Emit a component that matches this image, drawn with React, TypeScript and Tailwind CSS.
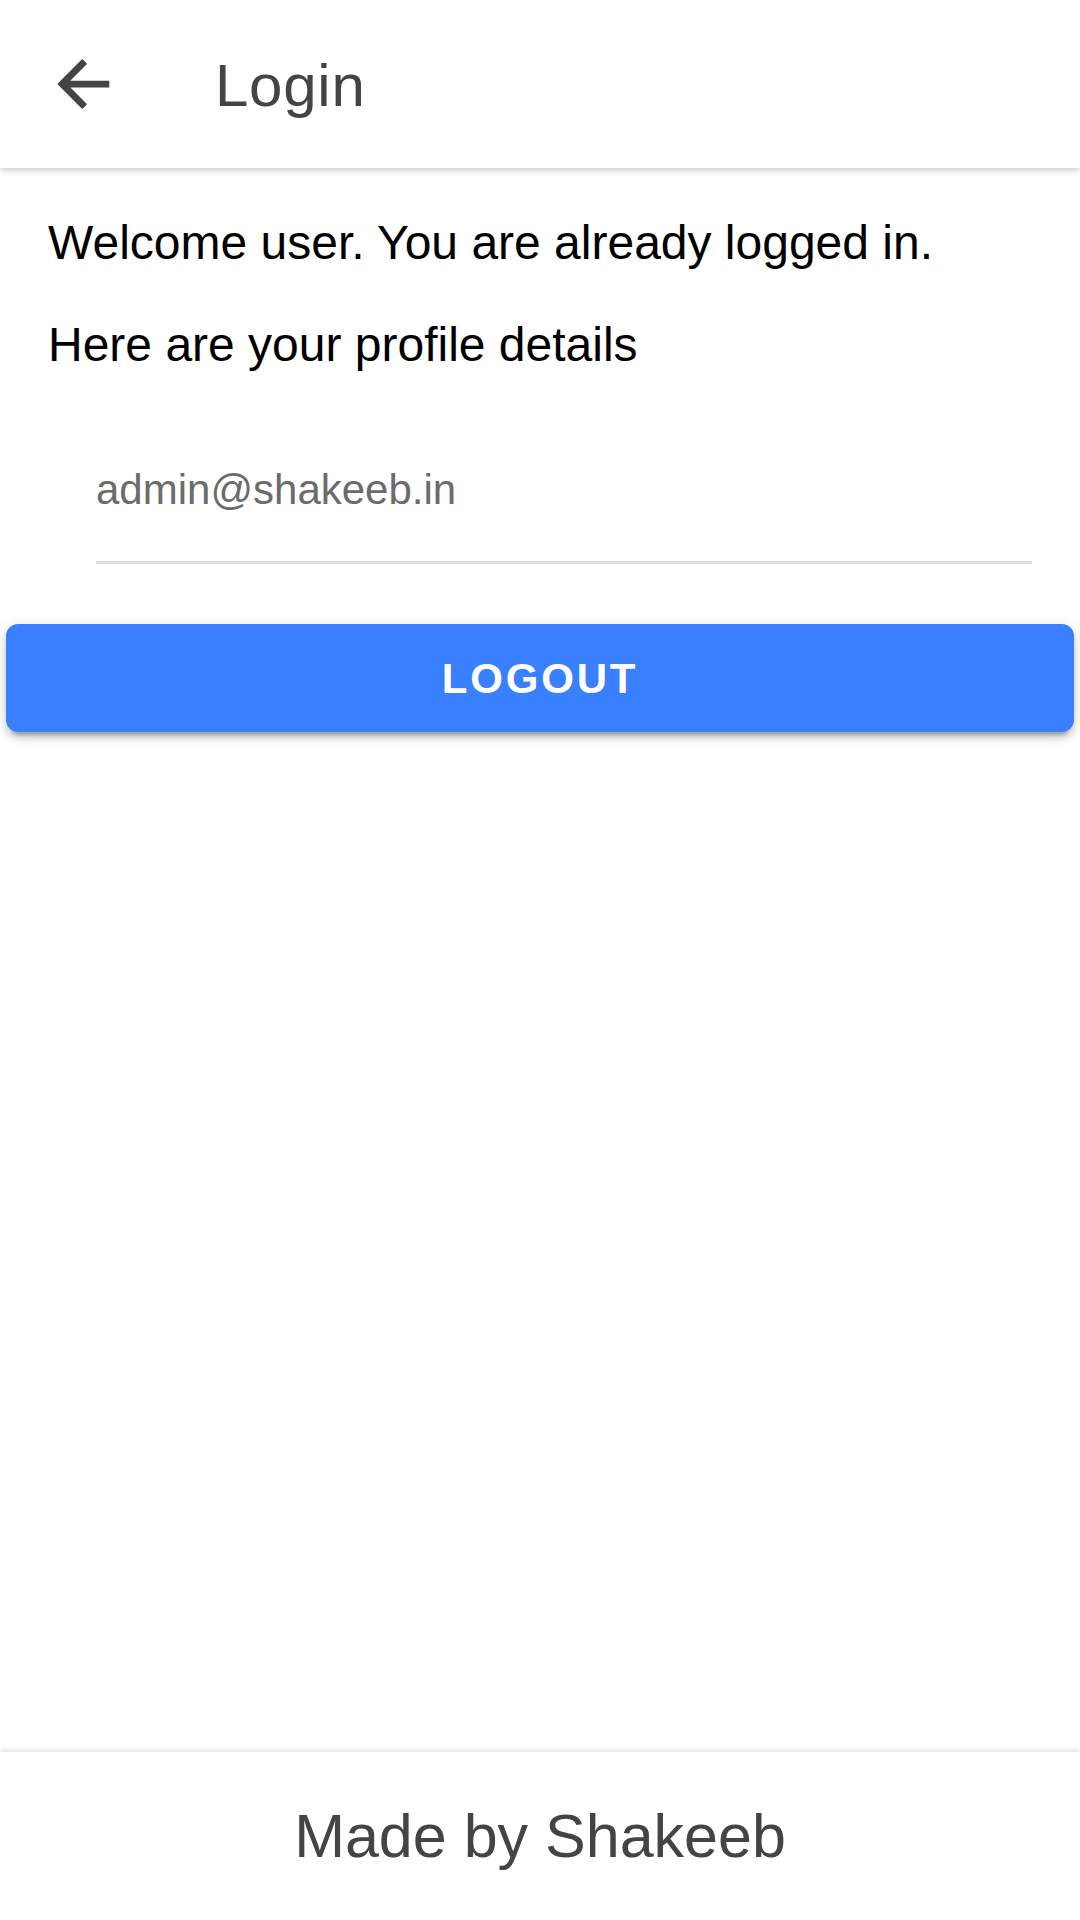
import React from "react";

export default function App() {
  return (
    <div className="flex h-[1920px] w-[1080px] flex-col bg-white font-['Liberation_Sans',Arial,sans-serif]">
      <header className="relative z-10 flex h-[168px] shrink-0 items-center bg-white shadow-[0_3px_6px_rgba(0,0,0,0.18)]">
        <div className="ml-[48px] h-[72px] w-[72px] text-[#444]">
          <svg viewBox="0 0 512 512" width="72" height="72">
            <path
              fill="none"
              stroke="currentColor"
              strokeLinecap="square"
              strokeMiterlimit="10"
              strokeWidth="48"
              d="M244 400L100 256l144-144M120 256h292"
            />
          </svg>
        </div>
        <h1 className="ml-[95px] pt-[3px] text-[60px] leading-[72px] tracking-[0.75px] text-[#444]">Login</h1>
      </header>

      <main className="flex flex-1 flex-col">
        <div className="px-[48px] pt-[47px]">
          <p className="text-[48px] leading-[56px] text-black">Welcome user. You are already logged in.</p>
          <p className="mt-[46px] text-[48px] leading-[56px] text-black">Here are your profile details</p>
        </div>
        <div className="ml-[96px] mr-[48px] mt-[93px] border-b-[3px] border-[#dedede] pb-[47px]">
          <div className="text-[42px] leading-[48px] text-[#6b6b6b]">admin@shakeeb.in</div>
        </div>
        <button className="mx-[6px] mt-[60px] flex h-[108px] items-center justify-center rounded-[12px] bg-[#3880ff] text-[42px] font-bold tracking-[2.8px] text-white shadow-[0_9px_3px_-6px_rgba(0,0,0,0.2),0_6px_6px_0_rgba(0,0,0,0.14),0_3px_15px_0_rgba(0,0,0,0.12)]">
          LOGOUT
        </button>
      </main>

      <footer className="relative z-10 flex h-[168px] shrink-0 items-center justify-center bg-white shadow-[0_-2px_5px_rgba(0,0,0,0.12)]">
        <span className="text-[61px] leading-[72px] text-[#444]">Made by Shakeeb</span>
      </footer>
    </div>
  );
}
